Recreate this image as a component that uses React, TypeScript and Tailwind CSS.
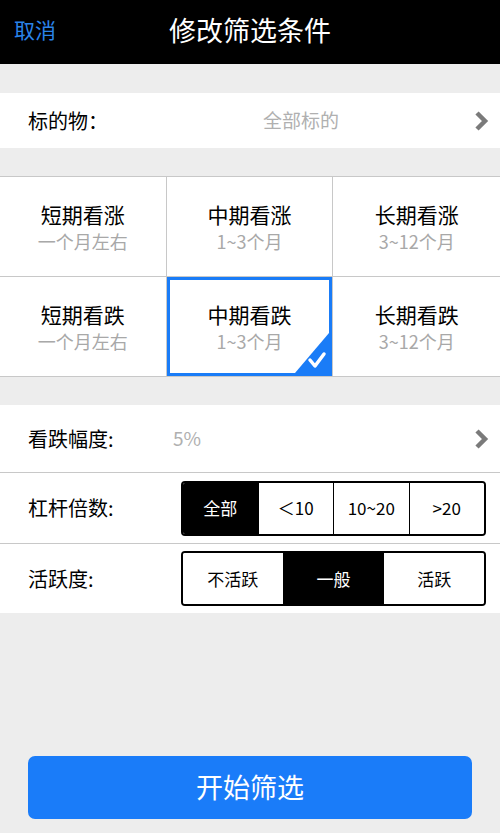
const font = { fontFamily: '"Noto Sans CJK SC", "Liberation Sans", sans-serif' };

const periods = [
  { title: "短期看涨", sub: "一个月左右" },
  { title: "中期看涨", sub: "1~3个月" },
  { title: "长期看涨", sub: "3~12个月" },
  { title: "短期看跌", sub: "一个月左右" },
  { title: "中期看跌", sub: "1~3个月", selected: true },
  { title: "长期看跌", sub: "3~12个月" },
];

function Chevron() {
  return (
    <svg width="16" height="24" viewBox="0 0 16 24">
      <path d="M3 4 L11 12 L3 20" stroke="#7a7a7a" strokeWidth="4.5" fill="none" strokeLinejoin="miter" />
    </svg>
  );
}

function Segments({ items, active }: { items: string[]; active: number }) {
  return (
    <div className="flex h-[55px] w-[305px] overflow-hidden rounded-[4px] border-2 border-black">
      {items.map((item, i) => (
        <div
          key={item}
          className={`flex flex-1 items-center justify-center text-[17px] ${
            i > 0 ? "border-l border-black" : ""
          } ${i === active ? "bg-black text-white" : "bg-white text-black"}`}
        >
          {item}
        </div>
      ))}
    </div>
  );
}

export default function App() {
  return (
    <div className="flex h-[833px] w-[500px] flex-col bg-[#ededed]" style={font}>
      {/* header */}
      <div className="relative flex h-[64px] items-center justify-center bg-black">
        <span className="absolute left-[14px] top-[14px] text-[21px] text-[#2a84ea]">取消</span>
        <span className="-mt-[4px] text-[27px] text-white">修改筛选条件</span>
      </div>

      <div className="mt-[29px] flex h-[55px] items-center bg-white pl-[28px] pr-[10px]">
        <span className="w-[235px] text-[20px] text-black">标的物：</span>
        <span className="flex-1 text-[19px] text-[#b0b0b0]">全部标的</span>
        <Chevron />
      </div>

      {/* period grid */}
      <div className="mt-[28px] grid grid-cols-3 border-t border-[#c8c8c8] bg-white">
        {periods.map((p, i) => (
          <div
            key={i}
            className={`relative flex h-[100px] flex-col items-center justify-center border-b border-[#c8c8c8] ${
              i % 3 !== 2 ? "border-r" : ""
            }`}
          >
            {p.selected && (
              <div className="absolute inset-0 border-[3px] border-[#1a7cf7]">
                <svg className="absolute bottom-0 right-0" width="34" height="40" viewBox="0 0 34 40">
                  <path d="M34 0 L34 40 L0 40 Z" fill="#1a7cf7" />
                  <path d="M15 27 L20 33 L29 21" stroke="white" strokeWidth="3.5" fill="none" strokeLinecap="round" strokeLinejoin="round" />
                </svg>
              </div>
            )}
            <span className="text-[21px] leading-[28px] text-black">{p.title}</span>
            <span className="text-[18px] leading-[26px] text-[#a8a8a8]">{p.sub}</span>
          </div>
        ))}
      </div>

      <div className="mt-[28px] bg-white">
        <div className="flex h-[68px] items-center border-b border-[#c8c8c8] pl-[28px] pr-[10px]">
          <span className="w-[145px] text-[20px] text-black">看跌幅度:</span>
          <span className="flex-1 text-[19px] text-[#b0b0b0]">5%</span>
          <Chevron />
        </div>
        <div className="flex h-[71px] items-center border-b border-[#c8c8c8] pl-[28px]">
          <span className="w-[153px] text-[20px] text-black">杠杆倍数:</span>
          <Segments items={["全部", "＜10", "10~20", ">20"]} active={0} />
        </div>
        <div className="flex h-[69px] items-center pl-[28px]">
          <span className="w-[153px] text-[20px] text-black">活跃度:</span>
          <Segments items={["不活跃", "一般", "活跃"]} active={1} />
        </div>
      </div>

      <div className="flex-1" />

      <button className="mx-[28px] mb-[14px] h-[63px] rounded-[7px] bg-[#1a7cf9] text-[27px] text-white">
        开始筛选
      </button>
    </div>
  );
}
